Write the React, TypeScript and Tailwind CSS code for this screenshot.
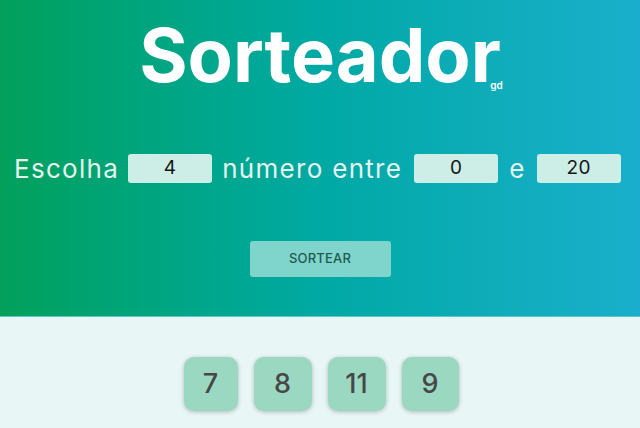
import React from "react";

const font = { fontFamily: "Inter, 'Open Sans', sans-serif" };

function Field({ value }: { value: string }) {
  return (
    <div className="w-[84px] h-[29px] rounded-[3px] bg-[#cdeee6] flex items-center justify-center text-[19px] text-[#151515] tracking-[0.5px]">
      {value}
    </div>
  );
}

export default function App() {
  const nums = [
    { n: "7", w: "w-[54px]" },
    { n: "8", w: "w-[58px]" },
    { n: "11", w: "w-[58px]" },
    { n: "9", w: "w-[57px]" },
  ];
  return (
    <div className="w-[640px] h-[428px] overflow-hidden bg-[#e8f6f6]" style={font}>
      <div className="h-[317px] bg-gradient-to-r from-[#03a05b] via-[#00a9a4] to-[#19afcc] border-b border-[#5cc9c6] flex flex-col items-center">
        <div className="relative mt-[14px]">
          <h1 className="text-[74px] leading-[82px] font-bold text-white tracking-[0px]">Sorteador</h1>
          <span className="absolute right-[-2px] top-[65px] text-[10px] leading-[12px] font-semibold text-white">gd</span>
        </div>
        <div className="mt-[53px] flex items-center text-[26px] text-[#e4f3ec] w-full pl-[14px] tracking-[1.3px]">
          <span>Escolha</span>
          <div className="ml-[9px]"><Field value="4" /></div>
          <span className="ml-[10px]">número entre</span>
          <div className="ml-[12px]"><Field value="0" /></div>
          <span className="ml-[11px]">e</span>
          <div className="ml-[11px]"><Field value="20" /></div>
        </div>
        <button className="mt-[53px] w-[141px] h-[36px] rounded-[3px] bg-[#7fd4cb] text-[13px] font-medium text-[#1d5a52] tracking-[0.2px]">
          SORTEAR
        </button>
      </div>
      <div className="flex justify-center gap-[16px] pt-[40px] pl-[2px]">
        {nums.map((x) => (
          <div
            key={x.n}
            className={`${x.w} h-[54px] rounded-[10px] bg-[#9ad8c2] text-[#474747] text-[27px] font-medium flex items-center justify-center shadow-[0_1px_4px_rgba(0,0,0,0.25)]`}
          >
            {x.n}
          </div>
        ))}
      </div>
    </div>
  );
}
